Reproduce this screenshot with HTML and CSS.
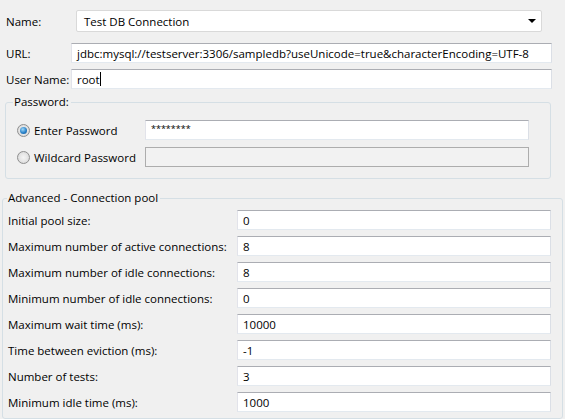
FILE: index.html
```html
<!DOCTYPE html>
<html>
<head>
<meta charset="utf-8">
<link rel="stylesheet" href="styles.css">
</head>
<body>
<div class="form">
  <div class="row row-name">
    <span class="lbl lbl-name">Name:</span>
    <div class="combo"><span class="val">Test DB Connection</span><span class="arrow"></span></div>
  </div>
  <div class="row row-url">
    <span class="lbl lbl-url">URL:</span>
    <div class="field field-wide"><span class="val">jdbc:mysql://testserver:3306/sampledb?useUnicode=true&amp;characterEncoding=UTF-8</span></div>
  </div>
  <div class="row row-user">
    <span class="lbl lbl-url">User Name:</span>
    <div class="field field-wide"><span class="val">root</span><span class="caret"></span></div>
  </div>

  <div class="group group-pass">
    <span class="legend">Password:</span>
    <div class="prow prow-first">
      <span class="radio checked"></span>
      <span class="rlabel">Enter Password</span>
      <div class="field field-pass"><span class="val stars">********</span></div>
    </div>
    <div class="prow">
      <span class="radio"></span>
      <span class="rlabel">Wildcard Password</span>
      <div class="field field-pass disabled"></div>
    </div>
  </div>

  <div class="group group-adv">
    <span class="legend legend-adv">Advanced - Connection pool</span>
    <div class="arow arow-first"><span class="alabel">Initial pool size:</span><div class="field field-adv"><span class="val">0</span></div></div>
    <div class="arow"><span class="alabel">Maximum number of active connections:</span><div class="field field-adv"><span class="val">8</span></div></div>
    <div class="arow"><span class="alabel">Maximum number of idle connections:</span><div class="field field-adv"><span class="val">8</span></div></div>
    <div class="arow"><span class="alabel">Minimum number of idle connections:</span><div class="field field-adv"><span class="val">0</span></div></div>
    <div class="arow"><span class="alabel">Maximum wait time (ms):</span><div class="field field-adv"><span class="val">10000</span></div></div>
    <div class="arow"><span class="alabel">Time between eviction (ms):</span><div class="field field-adv"><span class="val">-1</span></div></div>
    <div class="arow"><span class="alabel">Number of tests:</span><div class="field field-adv"><span class="val">3</span></div></div>
    <div class="arow"><span class="alabel">Minimum idle time (ms):</span><div class="field field-adv"><span class="val">1000</span></div></div>
  </div>
</div>
</body>
</html>
```

FILE: styles.css
```css
html, body {
  margin: 0;
  padding: 0;
  background: #f0f0f0;
}
body {
  font-family: "Open Sans", "Noto Sans", sans-serif;
  font-size: 11.5px;
  color: #000;
  width: 565px;
  height: 419px;
  overflow: hidden;
  white-space: nowrap;
}
.form {
  padding-top: 10px;
}
.row {
  display: flex;
  align-items: center;
  padding-left: 6px;
}
.row-name {
  height: 22px;
}
.row-url {
  height: 20px;
  margin-top: 11px;
}
.row-user {
  height: 20px;
  margin-top: 6px;
}
.lbl {
  flex: none;
}
.lbl-name {
  width: 70px;
}
.lbl-url {
  width: 65px;
}
.combo {
  box-sizing: border-box;
  width: 466px;
  height: 22px;
  background: #fff;
  border: 1px solid #d9d9d9;
  border-radius: 2px;
  display: flex;
  align-items: center;
  padding-left: 7px;
  padding-right: 5px;
}
.combo .val {
  flex: 1;
}
.arrow {
  width: 0;
  height: 0;
  border-left: 4px solid transparent;
  border-right: 4px solid transparent;
  border-top: 4px solid #000;
}
.field {
  box-sizing: border-box;
  height: 20px;
  background: #fff;
  border-top: 1px solid #abadb3;
  border-left: 1px solid #e2e3ea;
  border-right: 1px solid #dbdfe6;
  border-bottom: 1px solid #e3e9ef;
  display: flex;
  align-items: center;
  padding-left: 5px;
  overflow: hidden;
}
.field-wide {
  width: 481px;
}
.caret {
  width: 1px;
  height: 14px;
  background: #000;
}
.group {
  position: relative;
  box-sizing: border-box;
  border: 1px solid #d5dfe5;
  border-radius: 3px;
}
.legend {
  position: absolute;
  top: -9px;
  left: 7px;
  padding: 0 2px 0 1px;
  background: #f0f0f0;
  line-height: 16px;
}
.legend-adv {
  left: 4px;
}
.group-pass {
  margin-top: 13px;
  margin-left: 5px;
  width: 546px;
  height: 77px;
  padding-top: 17px;
}
.prow {
  display: flex;
  align-items: center;
  height: 20px;
  padding-left: 11px;
}
.prow + .prow {
  margin-top: 7px;
}
.radio {
  box-sizing: border-box;
  width: 13px;
  height: 13px;
  border-radius: 50%;
  border: 1px solid #8f8f8f;
  background: radial-gradient(circle at 50% 50%, #f4f4f4 0, #e6e6e6 50%, #cfcfcf 100%);
  flex: none;
  display: flex;
  align-items: center;
  justify-content: center;
}
.radio.checked::after {
  content: "";
  width: 7px;
  height: 7px;
  border-radius: 50%;
  background: radial-gradient(circle at 40% 35%, #9fd8f8 0, #2a82c9 55%, #0d4f8f 100%);
}
.rlabel {
  margin-left: 4px;
  width: 111px;
  flex: none;
}
.field-pass {
  width: 384px;
}
.field-pass.disabled {
  background: #f2f2f2;
  border: 1px solid #adadad;
}
.stars {
  font-size: 9px;
  margin-top: -3px;
}
.group-adv {
  margin-top: 19px;
  margin-left: 2px;
  width: 561px;
  height: 221px;
  padding-top: 11px;
  padding-left: 5px;
}
.arow {
  display: flex;
  align-items: center;
  height: 20px;
}
.arow + .arow {
  margin-top: 6px;
}
.alabel {
  width: 229px;
  flex: none;
}
.field-adv {
  width: 314px;
}
```
